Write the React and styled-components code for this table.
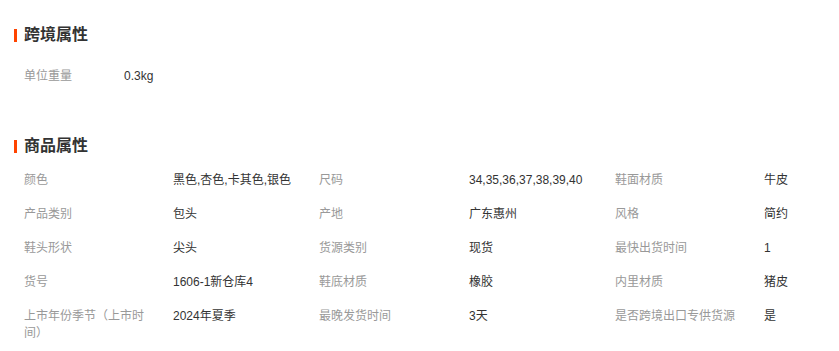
import React from "react";
import styled, { createGlobalStyle } from "styled-components";

const GlobalStyle = createGlobalStyle`
  body {
    margin: 0;
    background: #fff;
    font-family: "Liberation Sans", "Noto Sans CJK SC", sans-serif;
    font-size: 12px;
    color: #333;
  }
`;

const Page = styled.div`
  padding: 25px 0 0 14px;
  width: 839px;
  box-sizing: border-box;
`;

const Section = styled.section`
  margin-bottom: ${({ gap }) => gap || 0}px;
`;

const Heading = styled.h3`
  display: flex;
  align-items: center;
  gap: 7px;
  margin: 0;
  height: 20px;
  font-size: 16px;
  font-weight: 700;
  color: #333;
  line-height: 20px;

  &::before {
    content: "";
    width: 3px;
    height: 13px;
    background: #ff4400;
  }
`;

const PropGrid = styled.div`
  display: grid;
  grid-template-columns: ${({ cols }) => cols};
  padding: ${({ top }) => top}px 0 0 10px;
`;

const Label = styled.div`
  padding: 10px 20px 7px 0;
  line-height: 17px;
  color: #999;
`;

const Value = styled.div`
  padding: 10px 10px 7px 0;
  line-height: 17px;
  color: #333;
`;

const crossBorder = [["单位重量", "0.3kg"]];

const goods = [
  ["颜色", "黑色,杏色,卡其色,银色"],
  ["尺码", "34,35,36,37,38,39,40"],
  ["鞋面材质", "牛皮"],
  ["产品类别", "包头"],
  ["产地", "广东惠州"],
  ["风格", "简约"],
  ["鞋头形状", "尖头"],
  ["货源类别", "现货"],
  ["最快出货时间", "1"],
  ["货号", "1606-1新仓库4"],
  ["鞋底材质", "橡胶"],
  ["内里材质", "猪皮"],
  ["上市年份季节（上市时间）", "2024年夏季"],
  ["最晚发货时间", "3天"],
  ["是否跨境出口专供货源", "是"],
];

const Props = ({ items }) =>
  items.map(([k, v]) => (
    <React.Fragment key={k}>
      <Label>{k}</Label>
      <Value>{v}</Value>
    </React.Fragment>
  ));

const App = () => (
  <Page>
    <GlobalStyle />
    <Section gap={44}>
      <Heading>跨境属性</Heading>
      <PropGrid cols="100px 200px" top={13}>
        <Props items={crossBorder} />
      </PropGrid>
    </Section>
    <Section>
      <Heading>商品属性</Heading>
      <PropGrid cols="149px 146px 150px 146px 149px 80px" top={6}>
        <Props items={goods} />
      </PropGrid>
    </Section>
  </Page>
);

export default App;
